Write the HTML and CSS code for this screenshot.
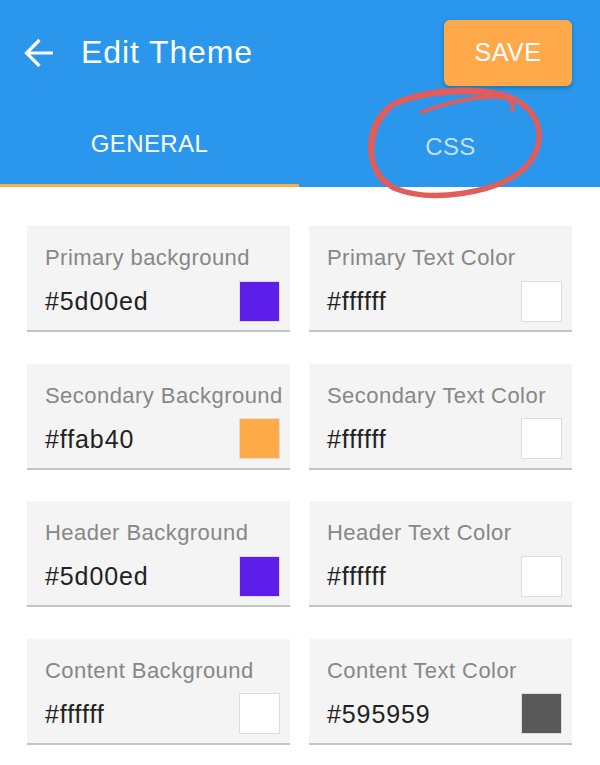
FILE: index.html
```html
<!DOCTYPE html>
<html>
<head>
<meta charset="utf-8">
<link rel="stylesheet" href="styles.css">
</head>
<body>
<div class="app">
  <header class="header">
    <div class="toolbar">
      <div class="title-group">
        <svg class="back" viewBox="0 0 30 30" width="30" height="30">
          <path d="M29 15H2.5M15.5 2L2.5 15l13 13" fill="none" stroke="#fff" stroke-width="3.2" stroke-linecap="butt" stroke-linejoin="miter"/>
        </svg>
        <h1 class="title">Edit Theme</h1>
      </div>
      <button class="save">SAVE</button>
    </div>
    <nav class="tabs">
      <div class="tab active">GENERAL</div>
      <div class="tab">CSS</div>
    </nav>
    <svg class="scribble" viewBox="0 0 600 200" width="600" height="200">
      <path d="M400 101 C430 89 480 86 510 97 C546 112 548 150 520 172 C494 192 432 204 394 188 C362 170 364 122 394 104 C420 92 470 88 500 96" fill="none" stroke="#e05d5b" stroke-width="5.5" stroke-linecap="round"/>
      <path d="M384 182 C366 164 368 128 390 108" fill="none" stroke="#e05d5b" stroke-width="5" stroke-linecap="round"/>
      <path d="M422 112 C450 101 488 94 506 98 C512 100 514 106 512 110" fill="none" stroke="#e05d5b" stroke-width="4" stroke-linecap="round"/>
    </svg>
  </header>
  <main class="grid">
    <div class="field"><div class="label">Primary background</div><div class="row"><span class="value">#5d00ed</span><span class="swatch" style="background:#5e1ee9"></span></div></div>
    <div class="field"><div class="label">Primary Text Color</div><div class="row"><span class="value">#ffffff</span><span class="swatch" style="background:#ffffff"></span></div></div>
    <div class="field"><div class="label">Secondary Background</div><div class="row"><span class="value">#ffab40</span><span class="swatch" style="background:#ffab4a"></span></div></div>
    <div class="field"><div class="label">Secondary Text Color</div><div class="row"><span class="value">#ffffff</span><span class="swatch" style="background:#ffffff"></span></div></div>
    <div class="field"><div class="label">Header Background</div><div class="row"><span class="value">#5d00ed</span><span class="swatch" style="background:#5e1ee9"></span></div></div>
    <div class="field"><div class="label">Header Text Color</div><div class="row"><span class="value">#ffffff</span><span class="swatch" style="background:#ffffff"></span></div></div>
    <div class="field"><div class="label">Content Background</div><div class="row"><span class="value">#ffffff</span><span class="swatch" style="background:#ffffff"></span></div></div>
    <div class="field"><div class="label">Content Text Color</div><div class="row"><span class="value">#595959</span><span class="swatch" style="background:#595959"></span></div></div>
  </main>
</div>
</body>
</html>
```

FILE: styles.css
```css
* { box-sizing: border-box; }
html, body { margin: 0; padding: 0; background: #fff; }
body {
  font-family: "Liberation Sans", Arial, sans-serif;
  width: 600px;
  height: 765px;
  overflow: hidden;
}
.header {
  position: relative;
  background: #2a97ec;
  height: 187px;
}
.toolbar {
  height: 104px;
  display: flex;
  align-items: center;
  justify-content: space-between;
  padding: 0 28px 0 24px;
}
.title-group {
  display: flex;
  align-items: center;
  gap: 27px;
}
.back { display: block; margin-top: 1px; }
.title {
  margin: 0;
  color: #fff;
  font-weight: 400;
  font-size: 32px;
  letter-spacing: 0.9px;
  line-height: 1;
}
.save {
  width: 128px;
  height: 66px;
  border: none;
  border-radius: 6px;
  background: #ffa94a;
  color: #fff;
  font-family: inherit;
  font-size: 25px;
  letter-spacing: 0.6px;
  box-shadow: 0 2px 4px rgba(0,0,0,0.25);
  margin-top: 1px;
}
.tabs {
  display: flex;
  height: 83px;
}
.tab {
  flex: 1;
  display: flex;
  align-items: center;
  justify-content: center;
  color: rgba(255,255,255,0.72);
  font-size: 24px;
  letter-spacing: 0.4px;
  padding-top: 3px;
}
.tab.active {
  color: #fff;
  border-bottom: 3px solid #ffab40;
  padding-top: 0;
  margin-right: 2px;
}
.scribble {
  position: absolute;
  left: 0;
  top: 0;
  pointer-events: none;
  overflow: visible;
}
.grid {
  display: grid;
  grid-template-columns: 263px 263px;
  column-gap: 19px;
  row-gap: 31.5px;
  padding: 39px 28px 0 27px;
}
.field {
  background: #f4f4f4;
  border-bottom: 2px solid #c4c4c4;
  height: 106px;
  padding: 19px 10px 0 18px;
}
.label {
  color: #878787;
  font-size: 22px;
  line-height: 26px;
  letter-spacing: 0.45px;
  white-space: nowrap;
}
.row {
  margin-top: 10px;
  height: 40px;
  display: flex;
  align-items: center;
  justify-content: space-between;
}
.value {
  color: #222;
  font-size: 25px;
  letter-spacing: 0.9px;
  padding-top: 1px;
}
.swatch {
  width: 41px;
  height: 41px;
  border: 1px solid #dcdcdc;
}
```
